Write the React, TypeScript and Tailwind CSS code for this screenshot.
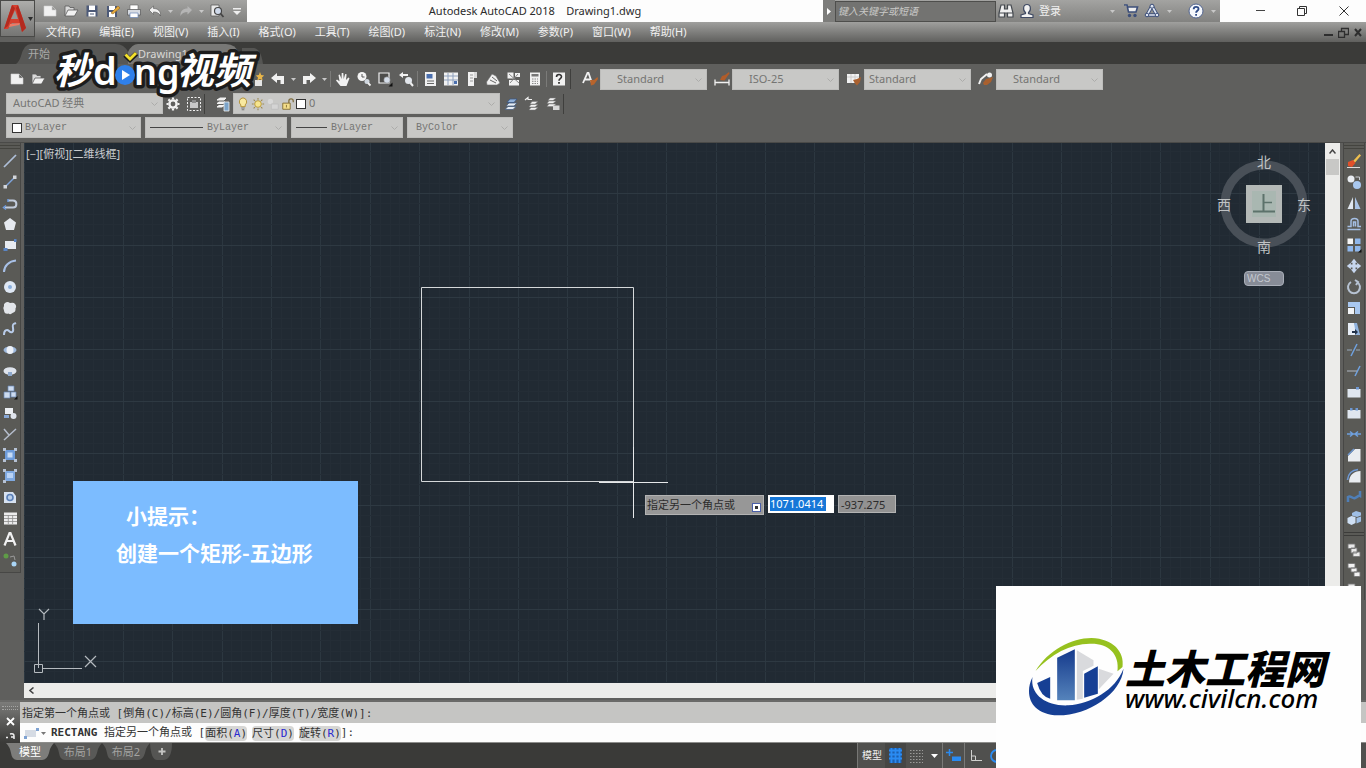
import React, { type ReactNode } from "react";

const UI = "font-['Noto_Sans','Noto_Sans_CJK_SC',sans-serif]";

function Ico({ children, size = 16 }: { children: ReactNode; size?: number }) {
  return (
    <svg width={size} height={size} viewBox="0 0 16 16" fill="none" aria-hidden="true" className="shrink-0">
      {children}
    </svg>
  );
}

const W = "#f1f1f1";
const G = "#c9ccd2";

const icons: Record<string, ReactNode> = {
  blank: <path d="M2 3h8l4 4v6H2z M10 3v4h4" fill={W} stroke="#d0d0d0" strokeWidth="0.6" />,
  open: (
    <>
      <path d="M2 13V3h4l1 1.500h4V7" fill="#d9d9d9" stroke="#5a5a5a" strokeWidth="0.8" />
      <path d="M2 13l3-6h10l-3.500 6z" fill={W} stroke="#5a5a5a" strokeWidth="0.8" />
    </>
  ),
  save: (
    <>
      <path d="M2.500 2.500h11v11h-11z" fill="#4d5a78" />
      <path d="M5 2.500h6v4.500H5zM4.500 9h7v4.500h-7z" fill="#fff" />
      <path d="M6 11h4" stroke="#4d5a78" />
    </>
  ),
  saveAs: (
    <>
      <path d="M2 3h10v11H2z" fill="#4d5a78" />
      <path d="M4 3h6v4H4zM4 9h6v5H4z" fill="#fff" />
      <path d="M6 10L13 3l2 2-7 6z" fill="#e3a83c" stroke="#9a6a1a" strokeWidth="0.6" />
    </>
  ),
  print: (
    <>
      <path d="M4 2h8v5H4z" fill="#fff" stroke="#666" strokeWidth="0.6" />
      <path d="M1.500 6.500h13V12h-13z" fill="#d7dbe2" stroke="#555" strokeWidth="0.7" />
      <path d="M4 10h8v4.500H4z" fill="#fff" stroke="#6a87b8" strokeWidth="0.7" />
    </>
  ),
  undoThin: <path d="M2 7l4.500-4v2.500C11 5.500 14 8 13.500 13 12 10 10 9 6.500 9v2.500z" fill={W} stroke="#555" strokeWidth="0.6" />,
  redoThin: <path d="M14 7L9.500 3v2.500C5 5.500 2 8 2.500 13 4 10 6 9 9.500 9v2.500z" fill="#b5b5b5" />,
  preview: (
    <>
      <path d="M2 2h8v11H2z" fill="#e9e9e9" stroke="#5a5a5a" strokeWidth="0.8" />
      <circle cx="9" cy="8" r="3.500" fill="#cfd9ea" stroke="#444" strokeWidth="1.200" />
      <path d="M11.500 10.500L14.500 14" stroke="#444" strokeWidth="1.800" />
    </>
  ),
  undo: <path d="M1 7l6-5v3h7v8h-3.500V9H7v3z" fill={W} />,
  redo: <path d="M15 7L9 2v3H2v8h3.500V9H9v3z" fill={W} />,
  star: (
    <>
      <path d="M6 9h7v6H6z" fill="#e5e5e5" />
      <path d="M11 1l1.200 3 3 .5-2.200 2 .6 3L11 8 8.300 9.500l.7-3-2.200-2 3-.5z" fill="#e9b64a" />
    </>
  ),
  hand: <path d="M5.500 15L1 9.500l1-1 2.500 1.800L3.500 4l1.300-.5L6.500 8 6.700 2h1.600l.4 6L10.200 3l1.400.3L11 9l2.300-2.500 1.200.8L11.500 15z" fill={W} />,
  zoomRt: (
    <>
      <circle cx="6" cy="5.500" r="4.500" fill="#f4f4f4" />
      <path d="M6 3v3h2.500" stroke="#555" />
      <circle cx="11" cy="10.500" r="2.500" fill="#cfd6de" />
      <path d="M12 12l2.500 2.500" stroke={W} strokeWidth="1.800" />
    </>
  ),
  zoomWin: (
    <>
      <path d="M2 2h10v10H2z" fill="#4d4d4b" stroke={W} strokeWidth="1.200" />
      <circle cx="10" cy="9" r="3.200" fill="#d5dde8" stroke="#777" strokeWidth="0.5" />
      <path d="M15.500 11.500v4h-4z" fill="#111" />
    </>
  ),
  zoomPrev: (
    <>
      <path d="M1 4l4-3v2h5v2H5v2z" fill={W} />
      <circle cx="10.500" cy="9.500" r="3.500" fill="#e2e6eb" />
      <path d="M12.500 12l2.500 3" stroke={W} strokeWidth="2" />
    </>
  ),
  props: (
    <>
      <path d="M3 1h11v14H3z" fill={W} />
      <path d="M4.500 3h6v4.500h-6z" fill="#4a6fae" />
      <path d="M5 10h7M5 12.500h7" stroke="#666" />
    </>
  ),
  design: (
    <>
      <path d="M1 1.500h14v13H1z" fill={W} />
      <path d="M1 5h14M1 9h14M5 2v12M10 2v12" stroke="#8fa1bd" />
      <path d="M11 10h3v3h-3z" fill="#4a6fae" />
    </>
  ),
  palettes: (
    <>
      <path d="M4 1h6v14H4z" fill={W} />
      <path d="M10 1h3v6h-3z" fill="#d8d8d8" />
      <path d="M6 4h3M6 7h3M6 10h3" stroke="#999" />
    </>
  ),
  sheets: (
    <>
      <path d="M1.500 11L7 3l4 2 4 7-3 2H2z" fill={W} stroke="#6b6b6b" strokeWidth="0.6" />
      <path d="M5 9l6 3M7 6l5 4" stroke="#666" />
    </>
  ),
  markup: (
    <>
      <path d="M1.500 1.500h6v6h-6zM9 2h5v4H9zM3 9h10v5.500H3z" fill={W} />
      <path d="M3 3l10 9M12 3L4 12" stroke="#888" />
    </>
  ),
  calc: (
    <>
      <path d="M3 1.500h10v13H3z" fill={W} />
      <path d="M4.500 3h7v2.500h-7z" fill="#777" />
      <path d="M5 8h6M5 10.300h6M5 12.500h6" stroke="#888" strokeDasharray="1.500 1" />
    </>
  ),
  helpBox: (
    <>
      <path d="M2 1.500h12v13H2z" fill={W} />
      <path d="M5.500 6c0-3.200 5-3.200 5-.3 0 2-2.500 1.800-2.500 4" stroke="#333" strokeWidth="1.600" />
      <path d="M7.100 11h1.800v1.800H7.100z" fill="#333" />
    </>
  ),
  textStyle: (
    <>
      <path d="M1 12L5.500 2h1L10 12M2.800 8.500h6" stroke={W} strokeWidth="1.800" />
      <path d="M8 9l4 0 3.500-3 .5 2-4 5.500-3 1z" fill="#b8642c" />
    </>
  ),
  dimStyle: (
    <>
      <path d="M1 8.500v6M15 8.500v6M1 11.500h14" stroke={W} strokeWidth="1.300" />
      <path d="M6 9l2-4 3-1 4-3 .5 1.500-3 4-2 3z" fill="#b05c2a" />
    </>
  ),
  tableStyle: (
    <>
      <path d="M1 3h12v9H1z" fill={W} />
      <path d="M1 6h12M5 3v9M9 3v9" stroke="#c5c5c5" strokeWidth="0.8" />
      <path d="M7 9l4-1 4-2-1 5-3 3.500-2-2z" fill="#a8602f" />
    </>
  ),
  leaderStyle: (
    <>
      <path d="M1 13l2-5 6-5" stroke={W} strokeWidth="2" />
      <circle cx="11.500" cy="4" r="2.500" fill={W} />
      <path d="M5 12l3-4 4-1 3-1-2 5-4 3-3 0z" fill="#a8602f" />
    </>
  ),
  gear: (
    <>
      <circle cx="8" cy="8" r="3.600" stroke={W} strokeWidth="2.400" />
      <path d="M8 1.500v2M8 12.500v2M1.500 8h2M12.500 8h2M3.400 3.400l1.400 1.400M11.200 11.200l1.400 1.400M12.600 3.400l-1.400 1.400M4.800 11.200l-1.400 1.400" stroke={W} strokeWidth="2.200" />
    </>
  ),
  wsBox: (
    <>
      <path d="M1.500 1.500h13v13h-13z" stroke={W} strokeDasharray="2 1.500" />
      <path d="M4 6h8v6H4z" fill="#c8c8c8" />
      <path d="M6 4h4v3H6z" fill="#8b8b8b" />
    </>
  ),
  layers: (
    <>
      <path d="M2 4l3-2h6L9 4zM2 7.500l2-1.500h6L8 7.500zM2 11l2-1.500h5L7 11z" fill={W} stroke={W} />
      <path d="M9 6h5v9H9z" fill="#7aa3c9" stroke={W} strokeWidth="0.8" />
    </>
  ),
  layerCur: (
    <>
      <path d="M2 13.500h8l3-3H5zM3 10h8l3-3H6z" fill="#e7edf4" stroke="#49607f" strokeWidth="0.8" />
      <path d="M4 6.500h7l3-3.500H7z" fill="#8fb0d8" stroke="#3a5580" strokeWidth="0.8" />
    </>
  ),
  layerPrev: (
    <>
      <path d="M1 4l3-2.500v2h4" stroke={W} strokeWidth="1.200" />
      <path d="M5 14h6l3-2.500H7zM5 11h6l3-2.500H7zM6 8h5l3-2.500H8z" fill={W} stroke="#777" strokeWidth="0.5" />
    </>
  ),
  layerState: (
    <>
      <path d="M2 10.500h6l3-2.500H4zM2 7.500h6l3-2.500H4zM3 4.500h5l3-2.500H5z" fill={W} stroke="#777" strokeWidth="0.5" />
      <path d="M8 9.500h6.500V14H8z" fill="#d9d9d9" />
    </>
  ),
  bulb: (
    <>
      <path d="M8 1a4.500 4.500 0 0 0-2.500 8v2h5V9A4.500 4.500 0 0 0 8 1z" fill="#f8e9a0" stroke="#b08d2e" />
      <path d="M6 12.500h4M6.500 14.500h3" stroke="#777" strokeWidth="1.200" />
    </>
  ),
  sun: (
    <>
      <circle cx="8" cy="8" r="3.800" fill="#f6e58e" stroke="#b6942f" />
      <path d="M8 1v2M8 13v2M1 8h2M13 8h2M3 3l1.500 1.500M11.500 11.500L13 13M13 3l-1.500 1.500M4.500 11.500L3 13" stroke="#9a8850" strokeWidth="1.200" />
    </>
  ),
  vpSun: (
    <>
      <circle cx="5" cy="5" r="3" fill="#d8d8d8" />
      <path d="M6 8h8v6H6z" fill="#d4d4d4" stroke="#bdbdbd" />
    </>
  ),
  lock: (
    <>
      <path d="M9 7V4.500c0-3 5-3 5 0V6" stroke="#7d6a3a" strokeWidth="1.400" />
      <path d="M2 7h8.500v7H2z" fill="#f3dd8a" stroke="#806a30" />
      <path d="M6.200 9v3" stroke="#806a30" />
    </>
  ),
  line: <path d="M2 14L14 2" stroke="#aebfd8" strokeWidth="1.700" />,
  xline: (
    <>
      <path d="M3 13L13 3" stroke="#7ea4dc" strokeWidth="1.500" />
      <path d="M1.500 11h3.500v3.500H1.500zM11 1.500h3.500V5H11z" fill="#d3d6db" />
    </>
  ),
  pline: (
    <>
      <path d="M3 12.500h8c4.500 0 4.500-7 0-7H6" stroke="#c3cddd" strokeWidth="2" />
      <path d="M4 10.500l-2.500 2L4 14.500M6 4v3" stroke="#6f9cdf" strokeWidth="1.500" />
    </>
  ),
  polygon: <path d="M8 2l6 4.500L12 14H4L2 6.500z" fill="#e6eaf0" />,
  rect: (
    <>
      <path d="M3 4h11v8H3z" fill="#e8ebf0" />
      <path d="M1.500 11h4v3h-4zM12 2h2.500v3H12z" fill="#5a85c4" />
    </>
  ),
  arc: <path d="M2 14C2 8 7 3 14 2.500" stroke="#a8c0e6" strokeWidth="2" />,
  circle: (
    <>
      <circle cx="8" cy="8" r="6" fill="#dfe8f4" />
      <circle cx="8" cy="8" r="2" fill="#8aaedb" />
    </>
  ),
  cloud: <path d="M3 3q2.500-2 5 0 4-1 5 1 2 2 .5 4.500.5 3.500-3 4.500-2 2-4 .5-4 1-4.500-3-1.500-2.500 0-4.500-.5-2 1-3z" fill="#e3e6ea" />,
  spline: <path d="M2 14c0-5 3-6 5-4s5 2 4-3 1-4 3-5" stroke="#b8cbe8" strokeWidth="2" />,
  ellipse: (
    <>
      <ellipse cx="8" cy="8" rx="6.500" ry="3.500" fill="#9db8dc" />
      <ellipse cx="8" cy="8" rx="3.500" ry="4" fill="#edf1f7" />
    </>
  ),
  ellArc: (
    <>
      <ellipse cx="8" cy="8" rx="6.500" ry="3.800" fill="#dfe4ec" />
      <path d="M6 9h4v4H6z" fill="#8fa9cc" />
    </>
  ),
  insert: (
    <>
      <path d="M2 8h6v6H2zM6 2h6v5H6zM9 8h5v5H9z" fill="#cddbef" stroke="#6786b5" strokeWidth="0.7" />
      <path d="M15.500 12v3.500H12z" fill="#111" />
    </>
  ),
  block: (
    <>
      <path d="M3 3h8v6H3z" fill="#eceff3" />
      <path d="M2 10h5v3H2z" fill="#88a8d6" />
      <circle cx="11.500" cy="11" r="3" fill="#dfe4ec" />
    </>
  ),
  point: <path d="M2 14L14 3M2 3l5 6" stroke="#b4bccb" strokeWidth="1.500" />,
  hatch: (
    <>
      <path d="M3 3h10v10H3z" fill="#6d9bd9" />
      <path d="M5.500 5.500h5v5h-5z" fill="#c5dbf6" />
      <path d="M1 1h3v3H1zM12 1h3v3h-3zM1 12h3v3H1zM12 12h3v3h-3z" fill="#b6c2d4" />
    </>
  ),
  gradient: (
    <>
      <path d="M3 3h10v10H3z" fill="#7fa9e0" />
      <path d="M5 5h6v5H5z" fill="#b9d3f5" />
      <path d="M1 1h3v3H1zM12 1h3v3h-3zM1 12h3v3H1z" fill="#b6c2d4" />
    </>
  ),
  region: (
    <>
      <path d="M2 3h9l3 4v7H2z" fill="#d7e2f1" />
      <circle cx="8" cy="8.500" r="3" fill="#b9cfea" stroke="#5b80b8" strokeWidth="1.600" />
    </>
  ),
  table: (
    <>
      <path d="M2 2.500h13v12H2z" fill="#ececec" />
      <path d="M2 5.500h13M2 8.500h13M2 11.500h13M6.300 5v9M10.600 5v9" stroke="#8d8d8b" strokeWidth="0.8" />
    </>
  ),
  text: <path d="M2.500 14.500L7.500 2h1l5 12.500M4.500 10h7" stroke={W} strokeWidth="2.200" />,
  addSel: (
    <>
      <circle cx="4" cy="4" r="2.500" fill="#5f9c47" />
      <path d="M8 5l4-1 1 4" stroke="#9a9a9a" />
      <circle cx="12" cy="12" r="2.500" fill="#a9d5f5" />
    </>
  ),
  erase: (
    <>
      <path d="M7 8l6.500-7 1.500 1.500-6 7z" fill="#efc04e" />
      <path d="M2 9l5-2 2.500 3L6 14l-4-1z" fill="#e0502a" />
      <path d="M1 14.500h13" stroke="#ddd" />
    </>
  ),
  copy: (
    <>
      <circle cx="5" cy="5" r="3.500" fill="#e9edf2" />
      <circle cx="11" cy="11" r="4" fill="#a8c7ee" />
      <path d="M9.500 3h4v3" stroke={G} />
    </>
  ),
  mirror: (
    <>
      <path d="M7 2v12H1.500z" fill="#dfe6ee" />
      <path d="M9 2v12h5.500z" fill="#a9c2e4" />
    </>
  ),
  offset: <path d="M1.500 13.500h13M1.500 10.500H5V5.500c0-4 7-4 7 0v5h3M7.500 10.500V6h2v4.500" stroke="#a5bfe4" strokeWidth="1.500" />,
  array: (
    <>
      <path d="M1.500 1.500H7V7H1.500z" fill="#f5f5f5" />
      <path d="M9 1.500h5.500V7H9zM1.500 9H7v5.500H1.500zM9 9h5.500v5.500H9z" fill="#8fb7ec" />
      <path d="M15.500 12v3.500H12z" fill="#111" />
    </>
  ),
  move: <path d="M8 .8l3.200 4H9.500v1.700h1.700V4.800l4 3.200-4 3.200V9.500H9.500v1.700h1.700l-3.200 4-3.200-4h1.700V9.500H4.800v1.700L.8 8l4-3.200v1.700h1.700V4.800H4.800z" fill="#c6d6ee" />,
  rotate: <path d="M11 3a6 6 0 1 1-6 0M9 1l3 2-2 3" stroke="#b6c2d2" strokeWidth="2" />,
  scale: (
    <>
      <path d="M2 2h12v12H9V7H2z" fill="#a8c7ef" />
      <path d="M2 8h6v6H2z" fill="#f2f4f7" />
    </>
  ),
  stretch: (
    <>
      <path d="M2 2h6l6 12H2z" fill="#e7eef7" />
      <path d="M8 2h3l3 12h-4z" fill="#8fb2de" />
      <path d="M6 10h3V8l3 3-3 3v-2H6z" fill="#22324a" />
    </>
  ),
  trim: (
    <>
      <path d="M5 14L11 2" stroke="#6fa0dd" strokeWidth="1.500" />
      <path d="M1 8h5M10 8h4" stroke="#9ab" />
    </>
  ),
  extend: (
    <>
      <path d="M9 13l5-10" stroke="#6fa0dd" strokeWidth="1.500" />
      <path d="M1 8h10" stroke="#b0b8c4" />
    </>
  ),
  breakPt: (
    <>
      <path d="M1.500 5h13v8.500h-13z" fill="#dfe6ef" />
      <path d="M10 3h3v2.500h-3z" fill="#6d97d2" />
    </>
  ),
  breakTwo: (
    <>
      <path d="M1.500 5h13v8.500h-13z" fill="#dfe6ef" />
      <path d="M4 3h2.500v2.500H4zM9.500 3H12v2.500H9.500z" fill="#6d97d2" />
    </>
  ),
  join: <path d="M1 8h14M4 5.500L7 8l-3 2.500M12 5.500L9 8l3 2.500" stroke="#6fa0dd" strokeWidth="1.500" />,
  chamfer: (
    <>
      <path d="M9 2h5.500v12.500H2V9z" fill="#e9ecf0" />
      <path d="M2 8l6-6" stroke="#6d97d2" strokeWidth="1.500" />
    </>
  ),
  fillet: (
    <>
      <path d="M14.500 3v11.500H3C3 7 8 3 14.500 3z" fill="#e9ecf0" />
      <path d="M1.500 12C2 6 6 2 12 1.500" stroke="#6d97d2" strokeWidth="1.600" />
    </>
  ),
  blend: <path d="M2 13V8c3-2 4 2 7 1s3-3 5-2V2" stroke="#4f7fb8" strokeWidth="2.500" />,
  explode: (
    <>
      <path d="M1.500 8l4-2 4 1v6l-4 2-4-2z" fill="#cfe0f4" />
      <path d="M6 3l4-2 5 1.500v3L11 7 6 5.500zM10.500 8L15 6.500v5l-4.500 2z" fill="#9fbfe6" />
    </>
  ),
  order1: <path d="M2 2h7v4.500H2zM7 10h7v4.500H7zM5 6h6v5H5z" fill="#e9e9e9" stroke="#777" strokeWidth="0.9" />,
  order2: <path d="M2 1.500h7v4.500H2zM5 6h6v4H5zM8 10h6v4.500H8z" fill="#f2f2f2" stroke="#777" strokeWidth="0.9" />,
};

function ToolButton({ name, label, className = "h-[21px] w-[21px]" }: { name: string; label: string; className?: string }) {
  return (
    <button type="button" aria-label={label} className={`flex shrink-0 items-center justify-center ${className}`}>
      <Ico>{icons[name]}</Ico>
    </button>
  );
}

function Caret({ className = "w-2.5" }: { className?: string }) {
  return (
    <button type="button" aria-label="更多选项" className={`flex h-5 shrink-0 items-center justify-center ${className}`}>
      <svg width="5" height="3" viewBox="0 0 5 3" aria-hidden="true">
        <path d="M0 0h5L2.500 3z" fill="#c8c8c8" />
      </svg>
    </button>
  );
}

function Sep() {
  return <span className="mx-[1px] h-4 w-px shrink-0 border-r border-[#7b7b79] bg-[#474745]" />;
}

function Combo({
  label,
  value,
  className,
  textClass = "text-[11px]",
  children,
}: {
  label: string;
  value: string;
  className: string;
  textClass?: string;
  children?: ReactNode;
}) {
  return (
    <label className={`relative flex h-[21px] shrink-0 border border-[#bdbdbb] bg-[#c8c8c6] ${className}`}>
      <select aria-label={label} className={`w-full appearance-none bg-transparent text-[#757573] outline-none ${textClass}`}>
        <option>{value}</option>
      </select>
      {children}
      <svg width="7" height="4" viewBox="0 0 7 4" fill="none" aria-hidden="true" className="pointer-events-none absolute top-2 right-1">
        <path d="M.5.500L3.500 3.500 6.500.500" stroke="#acacaa" />
      </svg>
    </label>
  );
}

function TitleBar() {
  return (
    <div className="flex h-[22px] items-stretch">
      <div className="flex w-[212px] shrink-0 items-center bg-gradient-to-b from-[#a3a3a1] to-[#828280] pl-1">
        <ToolButton name="blank" label="新建" />
        <ToolButton name="open" label="打开" />
        <ToolButton name="save" label="保存" />
        <ToolButton name="saveAs" label="另存为" />
        <ToolButton name="print" label="打印" />
        <ToolButton name="undoThin" label="放弃" />
        <Caret />
        <ToolButton name="redoThin" label="重做" />
        <Caret />
        <ToolButton name="preview" label="预览" />
        <button type="button" aria-label="自定义快速访问工具栏" className="flex h-5 w-5 items-center justify-center">
          <svg width="8" height="7" viewBox="0 0 8 7" aria-hidden="true">
            <path d="M0 0h8v1.500H0zM0 3h8L4 7z" fill="#eee" />
          </svg>
        </button>
      </div>
      <h1 className="flex flex-1 items-center justify-center whitespace-pre bg-[#fdfdfd] text-[11px] text-[#2b2b2b]">{"Autodesk AutoCAD 2018    Drawing1.dwg"}</h1>
      <div className="flex w-[397px] shrink-0 items-center bg-gradient-to-b from-[#a3a3a1] to-[#828280]">
        <button type="button" aria-label="展开搜索" className="flex h-full w-3 items-center justify-center bg-[#7d7d7b]">
          <svg width="4" height="7" viewBox="0 0 4 7" aria-hidden="true">
            <path d="M0 0l4 3.500L0 7z" fill="#fff" />
          </svg>
        </button>
        <input
          type="text"
          aria-label="搜索"
          placeholder="键入关键字或短语"
          className="h-[21px] w-[161px] border border-[#4e4e4c] bg-[#737371] pl-0.5 text-[10px] italic outline-none placeholder:text-[#c9c9c7]"
        />
        <button type="button" aria-label="查找" className="flex h-5 w-[19px] items-center justify-center">
          <Ico>
            <path d="M3 2h3.500v4h3V2H13l2 8v4H9.500v-4h-3v4H1v-4z" fill="#f0f0f0" stroke="#44494f" strokeWidth="1.200" />
            <path d="M1 10h5.500M9.500 10H15" stroke="#44494f" />
          </Ico>
        </button>
        <button type="button" className="flex h-5 items-center gap-1 pl-1 text-[11px] text-[#f0f0f0]">
          <Ico>
            <path d="M8 1.500c4.500 0 4 6.500 1.500 8v1l4.500 1.500v2.500H2V12l4.500-1.500v-1C4 8 3.500 1.500 8 1.500z" fill="#f2f2f2" stroke="#3f4a63" strokeWidth="1.200" />
          </Ico>
          登录
        </button>
        <span className="flex flex-1 items-center justify-end">
          <Caret className="w-4" />
          <span className="flex pr-0.5">
            <button type="button" aria-label="商店" className="flex h-5 w-[21px] items-center justify-center">
              <Ico>
                <path d="M1 2h3l1.500 7H13l1.500-5H5" fill="#eee" stroke="#3d4f7a" strokeWidth="1.600" />
                <circle cx="6.500" cy="12.500" r="1.700" fill="#3d4f7a" />
                <circle cx="12" cy="12.500" r="1.700" fill="#3d4f7a" />
              </Ico>
            </button>
            <button type="button" aria-label="应用程序" className="flex h-5 w-[21px] items-center justify-center">
              <Ico>
                <path d="M8 3L3 12h10z" stroke="#3d4f7a" strokeWidth="3.600" strokeLinejoin="round" />
                <path d="M8 3L3 12h10z" stroke="#dfe6f2" strokeWidth="1.600" />
                <circle cx="8" cy="3.200" r="2" fill="#dfe6f2" stroke="#3d4f7a" />
                <circle cx="3" cy="12" r="1.800" fill="#dfe6f2" stroke="#3d4f7a" />
                <circle cx="13" cy="12" r="1.800" fill="#dfe6f2" stroke="#3d4f7a" />
              </Ico>
            </button>
          </span>
          <Caret />
          <button type="button" aria-label="帮助" className="ml-3 flex h-5 w-5 items-center justify-center">
            <Ico>
              <circle cx="8" cy="8" r="7" fill="#f6f8fc" stroke="#51648f" />
              <path d="M5.700 6.200c0-3.200 4.800-3 4.800-.3 0 1.900-2.400 1.700-2.400 3.800" stroke="#2d4a86" strokeWidth="1.900" />
              <path d="M7.200 11h1.800v1.700H7.200z" fill="#2d4a86" />
            </Ico>
          </button>
          <Caret className="w-3.5" />
        </span>
      </div>
      <div className="flex w-[146px] shrink-0 items-center justify-end bg-[#fdfdfd]">
        <button type="button" aria-label="最小化" className="flex h-full w-[41px] items-center justify-center">
          <svg width="10" height="10" viewBox="0 0 10 10" aria-hidden="true">
            <path d="M0 4.500h9" stroke="#444" />
          </svg>
        </button>
        <button type="button" aria-label="还原" className="flex h-full w-[41px] items-center justify-center">
          <svg width="10" height="10" viewBox="0 0 10 10" fill="none" aria-hidden="true">
            <path d="M.5 2.500h7v7h-7zM2.500 2.500v-2h7v7h-2" stroke="#333" />
          </svg>
        </button>
        <button type="button" aria-label="关闭" className="flex h-full w-11 items-center justify-center">
          <svg width="10" height="10" viewBox="0 0 10 10" aria-hidden="true">
            <path d="M.5.500l9 9M9.500.500l-9 9" stroke="#333" />
          </svg>
        </button>
      </div>
    </div>
  );
}

const menus = ["文件(F)", "编辑(E)", "视图(V)", "插入(I)", "格式(O)", "工具(T)", "绘图(D)", "标注(N)", "修改(M)", "参数(P)", "窗口(W)", "帮助(H)"];

function MenuBar() {
  return (
    <nav className="flex h-5 items-center gap-[19px] bg-gradient-to-b from-[#a0a09e] to-[#60605e] pl-[11px] text-[11px] text-[#f2f2f2]">
      {menus.map((m) => (
        <button type="button" key={m} className="shrink-0">
          {m}
        </button>
      ))}
      <span className="mr-1 ml-auto flex items-center gap-[5px]">
        <button type="button" aria-label="最小化图形">
          <svg width="9" height="9" viewBox="0 0 9 9" aria-hidden="true">
            <path d="M0 7h9" stroke="#2e2e2e" strokeWidth="2" />
          </svg>
        </button>
        <button type="button" aria-label="还原图形">
          <svg width="11" height="11" viewBox="0 0 11 11" fill="none" aria-hidden="true">
            <path d="M.500 4.500h6v6h-6zM3.500 4.500v-3h7v6h-4" stroke="#2e2e2e" strokeWidth="1.300" />
          </svg>
        </button>
        <button type="button" aria-label="关闭图形">
          <svg width="8" height="9" viewBox="0 0 8 9" aria-hidden="true">
            <path d="M1 1l6 7M7 1L1 8" stroke="#2e2e2e" strokeWidth="2" />
          </svg>
        </button>
      </span>
    </nav>
  );
}

function FileTabs() {
  return (
    <div className="flex h-[22px] items-end bg-[#3b3b39] pl-4 text-[11px]">
      <button type="button" className="relative h-5 w-[112px] shrink-0 text-left text-[#a9a9a7]">
        <svg width="112" height="20" viewBox="0 0 112 20" aria-hidden="true" className="absolute inset-0">
          <path d="M0 20Q3 18 5 12 8 0 15 0H100Q108 0 112 8V20z" fill="#575755" />
        </svg>
        <span className="relative pl-3">开始</span>
      </button>
      <button type="button" className="relative h-5 w-[114px] shrink-0 text-left text-[#d9d9d7]">
        <svg width="114" height="20" viewBox="0 0 114 20" aria-hidden="true" className="absolute inset-0">
          <path d="M0 20V8Q4 0 10 0H98Q108 0 111 10L114 20z" fill="#787876" />
        </svg>
        <span className="relative pl-2.5">Drawing1</span>
      </button>
      <button type="button" aria-label="新图形" className="relative h-4 w-[21px] shrink-0 text-[#8d8d8b]">
        <svg width="21" height="16" viewBox="0 0 21 16" aria-hidden="true" className="absolute inset-0">
          <path d="M0 16V0H12Q19 1 21 16z" fill="#555553" />
          <path d="M13 5v5M10.500 7.500h5" stroke="#8d8d8b" />
        </svg>
      </button>
    </div>
  );
}

function BrandMark() {
  return (
    <svg width="210" height="54" viewBox="0 0 210 54" role="img" aria-label="秒懂视频" className="pointer-events-none absolute top-[45px] left-[50px]">
      <g fill="#fff" stroke="#1c1c1c" strokeWidth="7" strokeLinejoin="round" paintOrder="stroke" fontFamily="'Noto Sans','Noto Sans CJK SC',sans-serif">
        <text x="4" y="39" fontSize="37" fontWeight="700" fontStyle="italic">秒</text>
        <text x="43" y="40" fontSize="38" fontWeight="600">d</text>
        <text x="84" y="40" fontSize="36" fontWeight="600">ng</text>
        <text x="127" y="39" fontSize="37" fontWeight="700" fontStyle="italic">视频</text>
      </g>
      <circle cx="75" cy="30" r="10" fill="#2f80ea" />
      <path d="M72 25l8 5-8 5z" fill="#fff" />
      <path d="M75 10l5 4.500 6.500-6" stroke="#1c1c1c" strokeWidth="5" fill="none" />
      <path d="M75.500 9.500l4.500 4.500 6-6" stroke="#f3e12d" strokeWidth="3" fill="none" />
    </svg>
  );
}

function Toolbars() {
  return (
    <div className="flex h-[78px] shrink-0 flex-col gap-[3px] bg-[#5f5f5d] pt-1 pl-1.5">
      <div className="flex h-[22px] items-center">
        <ToolButton name="blank" label="新建" />
        <ToolButton name="open" label="打开" />
        <span className="w-[198px] shrink-0" />
        <ToolButton name="star" label="块编辑器" />
        <ToolButton name="undo" label="放弃" />
        <Caret />
        <ToolButton name="redo" label="重做" />
        <Caret />
        <Sep />
        <ToolButton name="hand" label="平移" />
        <ToolButton name="zoomRt" label="实时缩放" />
        <ToolButton name="zoomWin" label="窗口缩放" />
        <ToolButton name="zoomPrev" label="缩放上一个" />
        <Sep />
        <ToolButton name="props" label="特性" />
        <ToolButton name="design" label="设计中心" />
        <ToolButton name="palettes" label="工具选项板" />
        <ToolButton name="sheets" label="图纸集" />
        <ToolButton name="markup" label="标记集" />
        <ToolButton name="calc" label="快速计算器" />
        <Sep />
        <ToolButton name="helpBox" label="帮助" />
        <span className="mr-2 ml-px h-5 w-px shrink-0 bg-[#3f3f3d]" />
        <ToolButton name="textStyle" label="文字样式" />
        <Combo label="文字样式" value="Standard" className="w-[107px]" textClass="pl-4 text-[11px]" />
        <ToolButton name="dimStyle" label="标注样式" className="ml-1 h-[21px] w-[21px]" />
        <Combo label="标注样式" value="ISO-25" className="w-[107px]" textClass="pl-4 text-[11px]" />
        <ToolButton name="tableStyle" label="表格样式" className="ml-1 h-[21px] w-[21px]" />
        <Combo label="表格样式" value="Standard" className="w-[107px]" textClass="pl-1 text-[11px]" />
        <ToolButton name="leaderStyle" label="多重引线样式" className="ml-1 h-[21px] w-[21px]" />
        <Combo label="多重引线样式" value="Standard" className="w-[107px]" textClass="pl-4 text-[11px]" />
      </div>
      <div className="flex h-[21px] items-center">
        <Combo label="工作空间" value="AutoCAD 经典" className="w-[157px]" textClass="pl-1.5 text-[11px]" />
        <ToolButton name="gear" label="工作空间设置" className="h-[21px] w-5" />
        <ToolButton name="wsBox" label="我的工作空间" />
        <span className="mr-[7px] h-5 w-px shrink-0 bg-[#3f3f3d]" />
        <ToolButton name="layers" label="图层特性" />
        <Combo label="图层" value="0" className="w-[267px]" textClass="pl-[75px] text-[11px]">
          <span className="pointer-events-none absolute top-[3px] left-0.5 flex gap-px">
            <Ico size={14}>{icons.bulb}</Ico>
            <Ico size={14}>{icons.sun}</Ico>
            <Ico size={14}>{icons.vpSun}</Ico>
            <Ico size={14}>{icons.lock}</Ico>
            <span className="mt-[2px] h-2.5 w-2.5 border border-[#333] bg-white" />
          </span>
        </Combo>
        <ToolButton name="layerCur" label="将对象的图层置为当前" />
        <ToolButton name="layerPrev" label="上一个图层" />
        <ToolButton name="layerState" label="图层状态" />
        <span className="h-5 w-px shrink-0 bg-[#3f3f3d]" />
      </div>
      <div className="flex h-[21px] items-center gap-1">
        <Combo label="颜色" value="ByLayer" className="w-[135px]" textClass="pl-[18px] font-['Liberation_Mono',monospace] text-[10px]">
          <span className="pointer-events-none absolute top-[5px] left-[5px] h-2.5 w-2.5 border border-[#333] bg-white" />
        </Combo>
        <Combo label="线型" value="ByLayer" className="w-[142px]" textClass="pl-[61px] font-['Liberation_Mono',monospace] text-[10px]">
          <span className="pointer-events-none absolute top-[9px] left-1 h-px w-[53px] bg-[#444]" />
        </Combo>
        <Combo label="线宽" value="ByLayer" className="w-[112px]" textClass="pl-[39px] font-['Liberation_Mono',monospace] text-[10px]">
          <span className="pointer-events-none absolute top-[9px] left-1 h-px w-[31px] bg-[#444]" />
        </Combo>
        <Combo label="打印样式" value="ByColor" className="w-[106px]" textClass="pl-2 font-['Liberation_Mono',monospace] text-[10px]" />
      </div>
    </div>
  );
}

const drawTools: [string, string][] = [
  ["line", "直线"],
  ["xline", "构造线"],
  ["pline", "多段线"],
  ["polygon", "多边形"],
  ["rect", "矩形"],
  ["arc", "圆弧"],
  ["circle", "圆"],
  ["cloud", "修订云线"],
  ["spline", "样条曲线"],
  ["ellipse", "椭圆"],
  ["ellArc", "椭圆弧"],
  ["insert", "插入块"],
  ["block", "创建块"],
  ["point", "点"],
  ["hatch", "图案填充"],
  ["gradient", "渐变色"],
  ["region", "面域"],
  ["table", "表格"],
  ["text", "多行文字"],
  ["addSel", "添加选定对象"],
];

const modifyTools: [string, string][] = [
  ["erase", "删除"],
  ["copy", "复制"],
  ["mirror", "镜像"],
  ["offset", "偏移"],
  ["array", "阵列"],
  ["move", "移动"],
  ["rotate", "旋转"],
  ["scale", "缩放"],
  ["stretch", "拉伸"],
  ["trim", "修剪"],
  ["extend", "延伸"],
  ["breakPt", "打断于点"],
  ["breakTwo", "打断"],
  ["join", "合并"],
  ["chamfer", "倒角"],
  ["fillet", "圆角"],
  ["blend", "光顺曲线"],
  ["explode", "分解"],
];

const orderTools: [string, string][] = [
  ["order1", "前置"],
  ["order2", "后置"],
  ["order1", "置于对象之上"],
];

function Grid() {
  const cols = Array.from({ length: 200 }, (_, i) => i);
  const rows = Array.from({ length: 100 }, (_, i) => i);
  return (
    <g shapeRendering="crispEdges">
      {cols.map((i) => (
        <path key={i} d={`M${Math.round(i * 9.88)}.5 0V1200`} stroke={i % 5 === 0 ? "#2c3740" : "#242d36"} />
      ))}
      {rows.map((i) => (
        <path key={i} d={`M0 ${Math.round(i * 10.4) - 2}.5H2000`} stroke={i % 5 === 0 ? "#2e3942" : "#242d36"} />
      ))}
    </g>
  );
}

function ViewCube() {
  return (
    <div className="absolute top-2 right-[13px] flex flex-col items-center gap-3">
      <svg width="96" height="108" viewBox="0 -3 96 108" aria-label="ViewCube" role="img">
        <circle cx="48" cy="50" r="39" fill="none" stroke="#495058" strokeWidth="9" />
        <path d="M30 31h36v38H30z" fill="#b4b9b7" />
        <path d="M36 37h24v26H36z" fill="#a9b7b1" />
        <path d="M47.500 40v17M37 57.500h22" stroke="#5c726b" strokeWidth="2" />
        <g fill="#c0c3c5" fontSize="14" textAnchor="middle" fontFamily="'Noto Sans CJK SC',sans-serif">
          <text x="48" y="13">北</text>
          <text x="48" y="98">南</text>
          <text x="8" y="56">西</text>
          <text x="88" y="56">东</text>
        </g>
        <path d="M48 48.500h8" stroke="#5c726b" strokeWidth="1.500" />
      </svg>
      <button type="button" className="h-[15px] w-10 rounded border border-[#a9aeb8] bg-[#878c97] pl-0.5 text-left font-['Liberation_Sans',sans-serif] text-[10px] leading-[13px] text-[#c4c8cf]">
        WCS
      </button>
    </div>
  );
}

function Canvas() {
  return (
    <div className="relative min-w-0 flex-1 overflow-hidden bg-[#212a33]">
      <svg width="100%" height="100%" className="absolute inset-0" aria-label="绘图区" role="img">
        <Grid />
        <path d="M397.500 144.500h212v194h-212z" fill="none" stroke="#d5d8da" />
        <path d="M575 339.500h69M609.500 304v71" stroke="#e6e8ea" />
        <g stroke="#b5babf" fill="none">
          <path d="M14.500 480v45M18 525.500h40M10.500 521.500h8v8h-8z" />
          <path d="M15 466l5 5 5-5M20 471v6M61 513l11 11M72 513l-11 11" strokeWidth="1.200" />
        </g>
      </svg>
      <p className="relative pt-[3px] pl-0.5 text-[11px] leading-4 text-[#c9cccf]">[−][俯视][二维线框]</p>
      <ViewCube />
      <aside className="absolute top-[338px] left-[49px] h-[143px] w-[285px] bg-[#7cbcff] pt-4 pl-[43px] font-['Noto_Sans_CJK_SC',sans-serif] text-[21px] leading-[37px] font-bold text-white">
        <p className="pl-2.5">小提示：</p>
        <p>创建一个矩形-五边形</p>
      </aside>
      <div className="absolute top-[352px] left-[621px] flex items-start gap-1 text-[11px] text-[#2c2c2c]">
        <label htmlFor="coord-x" className="flex h-5 w-[119px] items-center border border-[#b3b3b3] bg-[#979797] pl-px">
          指定另一个角点或
          <span className="mt-1 mr-0.5 ml-auto flex h-[9px] w-[9px] items-center justify-center border border-[#4a5fa8] bg-white">
            <span className="h-[3px] w-[3px] bg-[#333]" />
          </span>
        </label>
        <span className="flex h-[18px] w-[66px] items-center bg-white pl-0.5">
          <input id="coord-x" defaultValue="1071.0414" className="h-[14px] w-[56px] bg-[#1677d8] text-white outline-none" />
        </span>
        <input aria-label="Y 坐标" defaultValue="-937.275" className="h-[18px] w-[58px] border border-[#b3b3b3] bg-[#929292] pl-0.5 outline-none" />
      </div>
    </div>
  );
}

function Workspace() {
  return (
    <main className="flex min-h-0 flex-1 border-t border-[#4a4a48] bg-[#5f5f5d]">
      <div className="w-6 shrink-0">
        <div className="flex w-[21px] flex-col border-r border-b border-[#474745] bg-[#5a5a56] pb-0.5">
          <span className="mt-0.5 mb-px h-1 border-y border-[#44443f]" />
          {drawTools.map(([name, label]) => (
            <ToolButton key={name} name={name} label={label} className="h-[21px] w-5" />
          ))}
        </div>
      </div>
      <div className="flex min-w-0 flex-1 flex-col">
        <div className="flex min-h-0 flex-1">
          <Canvas />
          <div className="flex w-[15px] shrink-0 flex-col items-center bg-[#ececea]">
            <button type="button" aria-label="向上滚动" className="flex h-4 w-full items-center justify-center">
              <svg width="7" height="5" viewBox="0 0 7 5" fill="none" aria-hidden="true">
                <path d="M.5 4.500l3-3.500 3 3.500" stroke="#444" strokeWidth="1.500" />
              </svg>
            </button>
            <span className="h-4 w-[13px] bg-[#c8c8c6]" />
          </div>
        </div>
        <div className="mb-[2px] flex h-[15px] items-center bg-[#ececea]">
          <button type="button" aria-label="向左滚动" className="flex h-full w-[15px] items-center justify-center">
            <svg width="5" height="7" viewBox="0 0 5 7" fill="none" aria-hidden="true">
              <path d="M4.500.500L1 3.500l3.500 3" stroke="#444" strokeWidth="1.500" />
            </svg>
          </button>
        </div>
      </div>
      <div className="w-[26px] shrink-0 overflow-hidden pl-[3px]">
        <div className="flex w-[22px] flex-col border-x border-[#474745] bg-[#5a5a56]">
          <span className="mt-0.5 mb-px h-1 shrink-0 border-y border-[#44443f]" />
          {modifyTools.map(([name, label]) => (
            <ToolButton key={name} name={name} label={label} className="h-[21px] w-5" />
          ))}
          <span className="my-1 h-1 shrink-0 border-y border-[#3c3c3a]" />
          {orderTools.map(([name, label]) => (
            <ToolButton key={label} name={name} label={label} className="h-5 w-5" />
          ))}
        </div>
      </div>
    </main>
  );
}

const options: [string, string][] = [
  ["面积", "A"],
  ["尺寸", "D"],
  ["旋转", "R"],
];

function CommandLine() {
  return (
    <section className="flex h-[43px] shrink-0 border-t-2 border-[#6a6a68] bg-[#c5c5c3] font-['DejaVu_Sans_Mono','Noto_Sans_CJK_SC',monospace] text-[11px] text-[#333]">
      <div className="flex w-5 shrink-0 flex-col items-center justify-between bg-gradient-to-b from-[#7c7c7a] to-[#3a3a38] py-1">
        <span className="h-1 w-4 border-y border-dotted border-[#a5a5a3]" />
        <button type="button" aria-label="关闭命令行">
          <svg width="9" height="9" viewBox="0 0 9 9" aria-hidden="true">
            <path d="M1 1l7 7M8 1L1 8" stroke="#fff" strokeWidth="1.800" />
          </svg>
        </button>
        <svg width="9" height="6" viewBox="0 0 9 6" fill="none" aria-hidden="true">
          <path d="M0 4.500h2M4 1q4-1 4 2v3M8 4H5" stroke="#eee" strokeWidth="1.500" />
        </svg>
      </div>
      <div className="min-w-0 flex-1">
        <p className="flex h-[21px] items-center whitespace-pre pt-[3px] pl-0.5">指定第一个角点或 [倒角(C)/标高(E)/圆角(F)/厚度(T)/宽度(W)]:</p>
        <div className="flex h-5 items-center whitespace-pre border-b border-[#8d8d8b] bg-[#fdfdfd] pt-px pl-1">
          <button type="button" aria-label="最近使用的命令" className="mr-1 flex w-[23px] items-center">
            <svg width="22" height="14" viewBox="0 0 22 14" aria-hidden="true">
              <path d="M1 4h11v7H1z" fill="#d5dbe4" />
              <path d="M0 10h3v3H0zM12 2h3v3h-3z" fill="#7ea2d2" />
              <path d="M17 6h5l-2.500 3z" fill="#777" />
            </svg>
          </button>
          <b>RECTANG</b>
          <span> 指定另一个角点或 [</span>
          {options.map(([text, key], i) => (
            <React.Fragment key={key}>
              {i > 0 && <span className="w-[5px]" />}
              <button type="button" className="rounded-sm bg-[#d6d6d4] leading-[15px]">
                {text}(<span className="text-[#2a2ad0]">{key}</span>)
              </button>
            </React.Fragment>
          ))}
          <span>]:</span>
        </div>
      </div>
    </section>
  );
}

function LayoutTab({ label, active = false }: { label: string; active?: boolean }) {
  return (
    <button type="button" className={`relative h-[18px] w-12 ${active ? "text-white" : "text-[#a3a3a1]"}`}>
      <svg width="48" height="18" viewBox="0 0 48 18" aria-hidden="true" className="absolute inset-0">
        <path d="M0 0H48Q44 4 43 10 41 17 36 17H11Q6 17 5 10 4 4 0 0z" fill={active ? "#7d7d7b" : "#595957"} />
      </svg>
      <span className="relative leading-[17px]">{label}</span>
    </button>
  );
}

function StatusBar() {
  return (
    <footer className="flex h-[25px] shrink-0 items-start bg-[#3a3a38] text-[11px]">
      <div className="flex pl-1.5">
        <LayoutTab label="模型" active />
        <LayoutTab label="布局1" />
        <LayoutTab label="布局2" />
        <button type="button" aria-label="新建布局" className="h-[18px] w-6">
          <svg width="24" height="18" viewBox="0 0 24 18" aria-hidden="true">
            <path d="M0 0H22Q22 17 13 17H7Q1 17 0 0z" fill="#555553" />
            <path d="M12 5v7M8.500 8.500h7" stroke="#c5c5c3" strokeWidth="1.800" />
          </svg>
        </button>
      </div>
      <div className="ml-auto flex h-full w-[509px] items-center bg-[#50504e] text-[#f0f0f0]">
        <button type="button" className="h-full w-[26px] border-l border-[#777775] pl-[3px] text-[10px]">
          模型
        </button>
        <button type="button" aria-label="栅格" className="ml-0.5 flex h-full w-[21px] items-center justify-center bg-[#464644]">
          <svg width="13" height="15" viewBox="0 0 13 15" aria-hidden="true">
            <path d="M.500 0h12v15H.500z" fill="#1d5fae" />
            <path d="M0 2.500h13M0 6.500h13M0 10.500h13M2.500 0v15M6.500 0v15M10.500 0v15" stroke="#2a8bf2" strokeWidth="1.800" />
          </svg>
        </button>
        <button type="button" aria-label="捕捉" className="flex h-full w-[21px] items-center justify-center">
          <svg width="13" height="14" viewBox="0 0 13 14" aria-hidden="true">
            <path d="M0 1.500h13M0 4.500h13M0 7.500h13M0 10.500h13M0 13.500h13" stroke="#9b9b99" strokeWidth="1.200" strokeDasharray="1.500 1.500" />
          </svg>
        </button>
        <button type="button" aria-label="捕捉选项" className="flex h-full w-4 items-center justify-center border-r border-[#7a7a78]">
          <svg width="7" height="4" viewBox="0 0 7 4" aria-hidden="true">
            <path d="M0 0h7L3.500 4z" fill="#fff" />
          </svg>
        </button>
        <button type="button" aria-label="动态输入" className="flex h-full w-[22px] items-center justify-center border-r border-[#7a7a78]">
          <svg width="15" height="13" viewBox="0 0 15 13" aria-hidden="true">
            <path d="M3.500 0v7M0 3.500h7" stroke="#2a8bf2" strokeWidth="1.500" />
            <path d="M6 7.500h9V12H6z" fill="#2a8bf2" />
          </svg>
        </button>
        <button type="button" aria-label="正交" className="flex h-full w-[22px] items-center justify-center">
          <svg width="12" height="12" viewBox="0 0 12 12" fill="none" aria-hidden="true">
            <path d="M1.500 0v10.500H12M1.500 6h4v4.500" stroke="#d0d0ce" />
          </svg>
        </button>
        <button type="button" aria-label="极轴追踪" className="flex h-full w-5 items-center justify-center">
          <svg width="14" height="14" viewBox="0 0 14 14" fill="none" aria-hidden="true">
            <circle cx="7" cy="7" r="6" stroke="#2a8bf2" strokeWidth="1.800" />
          </svg>
        </button>
      </div>
    </footer>
  );
}

function SponsorPanel() {
  return (
    <div className="absolute right-[5px] bottom-0 flex h-[182px] w-[365px] items-center bg-[#fefefe] pl-8">
      <svg width="97" height="80" viewBox="0 0 290 240" aria-hidden="true" className="shrink-0">
        <defs>
          <linearGradient id="tower" x1="0" y1="0" x2="0" y2="1">
            <stop offset="0" stopColor="#153a8c" />
            <stop offset="1" stopColor="#5583bb" />
          </linearGradient>
        </defs>
        <path d="M22 102C60 40 130 3 190 3c65 2 100 42 93 87l-15 13C275 50 240 20 190 20 130 18 70 50 22 102z" fill="#96c11f" />
        <path d="M13 120C-12 170 5 232 90 235 180 235 280 170 286 95 260 160 190 200 120 205 50 208 5 170 13 120z" fill="#163f94" />
        <path d="M27 138l39-18v65q-28-6-39-47z" fill="#163f94" />
        <path d="M87 62l53-25v153H87z" fill="url(#tower)" />
        <path d="M146 40l50 30v16l-32 16v83l-18 3zM212 95l44 15-44 47z" fill="#d9dadd" />
        <path d="M168 110l41-22v82l-41 12z" fill="#163f94" />
      </svg>
      <div className="flex flex-col pt-1 italic text-black">
        <strong className="font-['Noto_Sans_CJK_SC',sans-serif] text-[40px] leading-[38px] font-black">土木工程网</strong>
        <span className="font-['Noto_Sans',sans-serif] text-[26px] leading-[24px] font-medium">www.civilcn.com</span>
      </div>
    </div>
  );
}

export default function App() {
  return (
    <div className={`relative flex h-screen flex-col overflow-hidden bg-[#5f5f5d] ${UI}`}>
      <header className="shrink-0">
        <div className="flex bg-[#60605e]">
          <button type="button" aria-label="应用程序菜单" className="flex h-[37px] w-[35px] shrink-0 items-center justify-center gap-px border border-[#4a4a48] bg-gradient-to-b from-[#adadab] to-[#757573]">
            <svg width="24" height="29" viewBox="0 0 24 29" aria-hidden="true">
              <path d="M1 25L9 1h6l8 23-4 4-2-8-8-1-4 6z" fill="#d6402f" />
              <path d="M1 25L9 1l3 3-7 18zM15 1l8 23-4 4-6-24z" fill="#b32a1f" />
              <path d="M8 15l4-9 3 9z" fill="#989896" />
              <path d="M7 20l10-1-1 2-10 2z" fill="#ee7a66" />
            </svg>
            <svg width="5" height="4" viewBox="0 0 5 4" aria-hidden="true">
              <path d="M0 0h5L2.500 4z" fill="#2c2c2c" />
            </svg>
          </button>
          <div className="min-w-0 flex-1">
            <TitleBar />
            <MenuBar />
          </div>
        </div>
        <FileTabs />
      </header>
      <Toolbars />
      <Workspace />
      <CommandLine />
      <StatusBar />
      <BrandMark />
      <SponsorPanel />
    </div>
  );
}
